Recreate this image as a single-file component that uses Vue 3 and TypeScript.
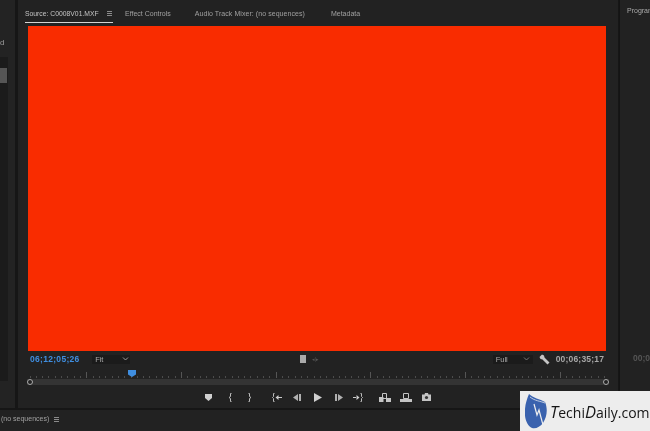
<script setup lang="ts">
const ticks = Array.from({ length: 92 }, (_, i) => i)
</script>

<template>
  <div class="app">
    <aside class="left">
      <span class="left-letter">d</span>
      <div class="left-slot"><div class="left-thumb"></div></div>
    </aside>
    <main class="source">
      <nav class="tabs">
        <span class="tab active">Source: C0008V01.MXF<i class="burger"></i></span>
        <span class="tab t2">Effect Controls</span>
        <span class="tab t3">Audio Track Mixer: (no sequences)</span>
        <span class="tab t4">Metadata</span>
      </nav>
      <div class="video"></div>
      <div class="controls">
        <span class="tc blue">06;12;05;26</span>
        <span class="select fit">Fit<svg width="7" height="4" viewBox="0 0 7 4"><path d="M1 .5l2.5 2.5L6 .5" fill="none" stroke="#999" /></svg></span>
        <span class="mid"><i class="mid-btn"></i><span class="mid-arrows">◂|▸</span></span>
        <span class="select full">Full<svg width="7" height="4" viewBox="0 0 7 4"><path d="M1 .5l2.5 2.5L6 .5" fill="none" stroke="#777" /></svg></span>
        <svg class="wrench" width="11" height="11" viewBox="0 0 11 11"><path d="M.5 3L3 .5 5 1.500 5.500 3.500 10.500 8.500 8.500 10.500 3.500 5.500 1.500 5z" fill="#c4c4c4" /></svg>
        <span class="tc grey">00;06;35;17</span>
      </div>
      <div class="ruler">
        <div class="ticks">
          <i v-for="t in ticks" :key="t" :class="{ major: t % 15 === 9 }"></i>
        </div>
        <svg class="head" width="8" height="7" viewBox="0 0 8 7"><path d="M0 0h8v4.500L4 7 0 4.500z" fill="#3f8ee0" /></svg>
        <div class="track"><i class="ring"></i><i class="ring"></i></div>
      </div>
      <div class="transport">
        <svg width="7" height="7" viewBox="0 0 7 7"><path d="M0 0h7v4L3.500 7 0 4z" fill="#d0d0d0" /></svg>
        <svg class="g16" width="5" height="9" viewBox="0 0 5 9"><path d="M3.500 .5H2.500v3L1 4.500l1.500 1v3h1" fill="none" stroke="#bbb" /></svg>
        <svg class="g14" width="5" height="9" viewBox="0 0 5 9"><path d="M1.500 .5h1v3L4 4.500l-1.500 1v3h-1" fill="none" stroke="#bbb" /></svg>
        <svg class="g20" width="10" height="9" viewBox="0 0 10 9"><path d="M2.500.5h-1v3L.5 4.500l1 1v3h1" stroke="#bbb" fill="none"/><path d="M3.500 4.500L6.500 2v5z M6 4h4v1H6z" fill="#ccc" /></svg>
        <svg class="g11" width="8" height="7" viewBox="0 0 8 7"><path d="M0 3.500L5 0v7z M6 0h2v7H6z" fill="#b0b0b0" /></svg>
        <svg class="g13" width="8" height="9" viewBox="0 0 8 9"><path d="M0 0l8 4.500L0 9z" fill="#d0d0d0" /></svg>
        <svg class="g13" width="8" height="7" viewBox="0 0 8 7"><path d="M0 0h2v7H0z M3 0l5 3.500L3 7z" fill="#b0b0b0" /></svg>
        <svg class="g10" width="10" height="9" viewBox="0 0 10 9"><path d="M7.500.5h1v3l1 1-1 1v3h-1" stroke="#bbb" fill="none"/><path d="M6.500 4.500L3.500 2v5z M0 4h4v1H0z" fill="#ccc" /></svg>
        <svg class="g16" width="12" height="9" viewBox="0 0 12 9"><path d="M0 4h4.500v5H0z M7 5h5v4H7z" fill="#c4c4c4" /><path d="M3.500.5h4v5h-4z" fill="none" stroke="#c4c4c4" /></svg>
        <svg class="g9" width="12" height="9" viewBox="0 0 12 9"><path d="M0 6h12v3H0z" fill="#c4c4c4" /><path d="M3.500.5h5v5h-5z" fill="none" stroke="#c4c4c4" /></svg>
        <svg class="g10" width="9" height="8" viewBox="0 0 9 8"><path d="M0 1.500h2.500L3 0h3l.5 1.500H9V8H0z" fill="#c4c4c4" /><circle cx="4.500" cy="4.500" r="1.600" fill="#333" /></svg>
      </div>
    </main>
    <aside class="right">
      <span class="prog">Program</span>
      <span class="prog-tc">00;0</span>
    </aside>
    <footer class="bottom">
      <span class="seq">(no sequences)</span><i class="burger"></i>
    </footer>
    <div class="brand">
      <svg class="brand-logo" width="22" height="35" viewBox="0 0 22 35">
        <path d="M4 0C8 4 15 5 20 8c3 7 2 15-2 21-3 4-7 6-11 5C2 32-1 24 0 15 .5 9 2 5 4 0z" fill="#3a62ae" />
        <path d="M5 3c5 4 10 4 15 6" fill="none" stroke="#dfe4ee" stroke-width=".8" />
        <path d="M9 10l3 11 2-5 4 15" fill="none" stroke="#eeeeee" stroke-width="1.200" />
      </svg>
      <span class="brand-text"><em>T</em>echi<em>D</em>aily.com</span>
    </div>
  </div>
</template>

<style>
html, body { margin: 0; background: #222; overflow: hidden; }
</style>

<style scoped>
.app {
  position: relative;
  width: 650px;
  height: 431px;
  display: grid;
  grid-template-columns: 15px 603px 32px;
  grid-template-rows: 408px 23px;
  background: #161616;
  font-family: "Liberation Sans", Arial, sans-serif;
  overflow: hidden;
  filter: blur(0.35px);
}
.left {
  background: #232323;
  position: relative;
}
.left-letter {
  position: absolute;
  left: 0;
  top: 38px;
  font-size: 8px;
  color: #9c9c9c;
}
.left-slot { margin-top: 57px; width: 8px; height: 324px; background: #1b1b1b; position: absolute; top: 0; }
.left-thumb { height: 15px; width: 7px; background: #555; position: relative; top: 11px; }
.source {
  background: #222;
  border-left: 3px solid #161616;
  display: flex;
  flex-direction: column;
}
.tabs {
  height: 26px;
  display: flex;
  align-items: center;
  padding-left: 7px;
  font-size: 7px;
  color: #a0a0a0;
  white-space: nowrap;
}
.tab.active {
  font-size: 6.800px;
  color: #c4c4c4;
  border-bottom: 1px solid #d4d4d4;
  height: 17px;
  line-height: 18px;
  margin-top: 1px;
  width: 88px;
}
.t2 { margin-left: 12px; }
.t3 { margin-left: 24px; letter-spacing: 0.060px; }
.t4 { margin-left: 26px; }
.burger {
  display: inline-block;
  width: 5px;
  height: 5px;
  margin-left: 8px;
  vertical-align: -0.500px;
  background: repeating-linear-gradient(#8a8a8a 0 1px, transparent 1px 2px);
}
.video { margin-left: 10px; width: 578px; height: 325px; background: #f92c00; }
.controls {
  height: 14px;
  margin-top: 1px;
  display: flex;
  align-items: center;
  margin-left: 12px;
  width: 574px;
}
.tc { font-size: 8.500px; font-weight: 700; letter-spacing: 0.200px; white-space: nowrap; }
.blue { color: #3f8ee0; letter-spacing: 0.300px; }
.grey { color: #a8a8a8; margin-left: 6px; }
.select {
  display: inline-flex;
  align-items: center;
  justify-content: space-between;
  background: #1b1b1b;
  color: #a8a8a8;
  font-size: 7.500px;
  height: 9px;
  flex: none;
  box-sizing: border-box;
}
.fit { width: 38px; margin-left: 12px; padding: 0 1px 0 3.500px; }
.full { width: 40px; padding: 0 3px 0 3px; }
.wrench { margin-left: 6px; flex: none; }
.mid { margin-left: 170px; width: 193px; flex: none; display: flex; align-items: center; gap: 6px; }
.mid-btn { width: 6px; height: 8px; background: #aaa; }
.mid-arrows { font-size: 5px; color: #555; }
.ruler { position: relative; height: 22px; margin: 0 9px 0 8.500px; }
.ticks {
  position: absolute;
  left: 3px;
  right: 3px;
  top: 6px;
  height: 6px;
  display: flex;
  justify-content: space-between;
  align-items: flex-end;
}
.ticks i { width: 1px; height: 2px; background: #4c4c4c; }
.ticks i.major { height: 6px; background: #555; }
.head { position: absolute; left: 101px; top: 4px; }
.track {
  position: absolute;
  left: 0;
  right: 0;
  top: 13px;
  height: 6px;
  background: #343434;
  display: flex;
  justify-content: space-between;
  align-items: center;
}
.ring {
  width: 6px;
  height: 6px;
  box-sizing: border-box;
  border-radius: 50%;
  border: 1.500px solid #aaa;
  background: #222;
}
.transport {
  height: 18px;
  display: flex;
  align-items: center;
  margin-left: 187px;
}
.transport svg { flex: none; }
.g9 { margin-left: 9px; }
.g10 { margin-left: 10px; }
.g11 { margin-left: 11px; }
.g13 { margin-left: 13px; }
.g14 { margin-left: 14px; }
.g16 { margin-left: 16px; }
.g20 { margin-left: 20px; }
.right {
  background: #222;
  position: relative;
  border-left: 1px solid #141414;
  margin-left: 1px;
  color: #aaa;
  overflow: hidden;
}
.prog { position: absolute; left: 7px; top: 7px; font-size: 7px; }
.prog-tc { position: absolute; left: 13px; top: 353px; font-size: 8.500px; font-weight: 700; color: #555; }
.bottom {
  grid-column: 1 / 4;
  background: #222;
  margin-top: 2px;
  font-size: 7px;
  color: #a0a0a0;
  padding: 5px 0 0 1px;
}
.bottom .burger { margin-left: 5px; }
.brand {
  position: absolute;
  left: 520px;
  top: 391px;
  width: 130px;
  height: 40px;
  background: #ededed;
  display: flex;
  align-items: center;
  padding-left: 5px;
  box-sizing: border-box;
}
.brand-text {
  margin-left: 3px;
  font-family: "Open Sans", sans-serif;
  font-size: 14px;
  color: #161616;
  white-space: nowrap;
}
.brand-text em { font-size: 16.500px; }
</style>
